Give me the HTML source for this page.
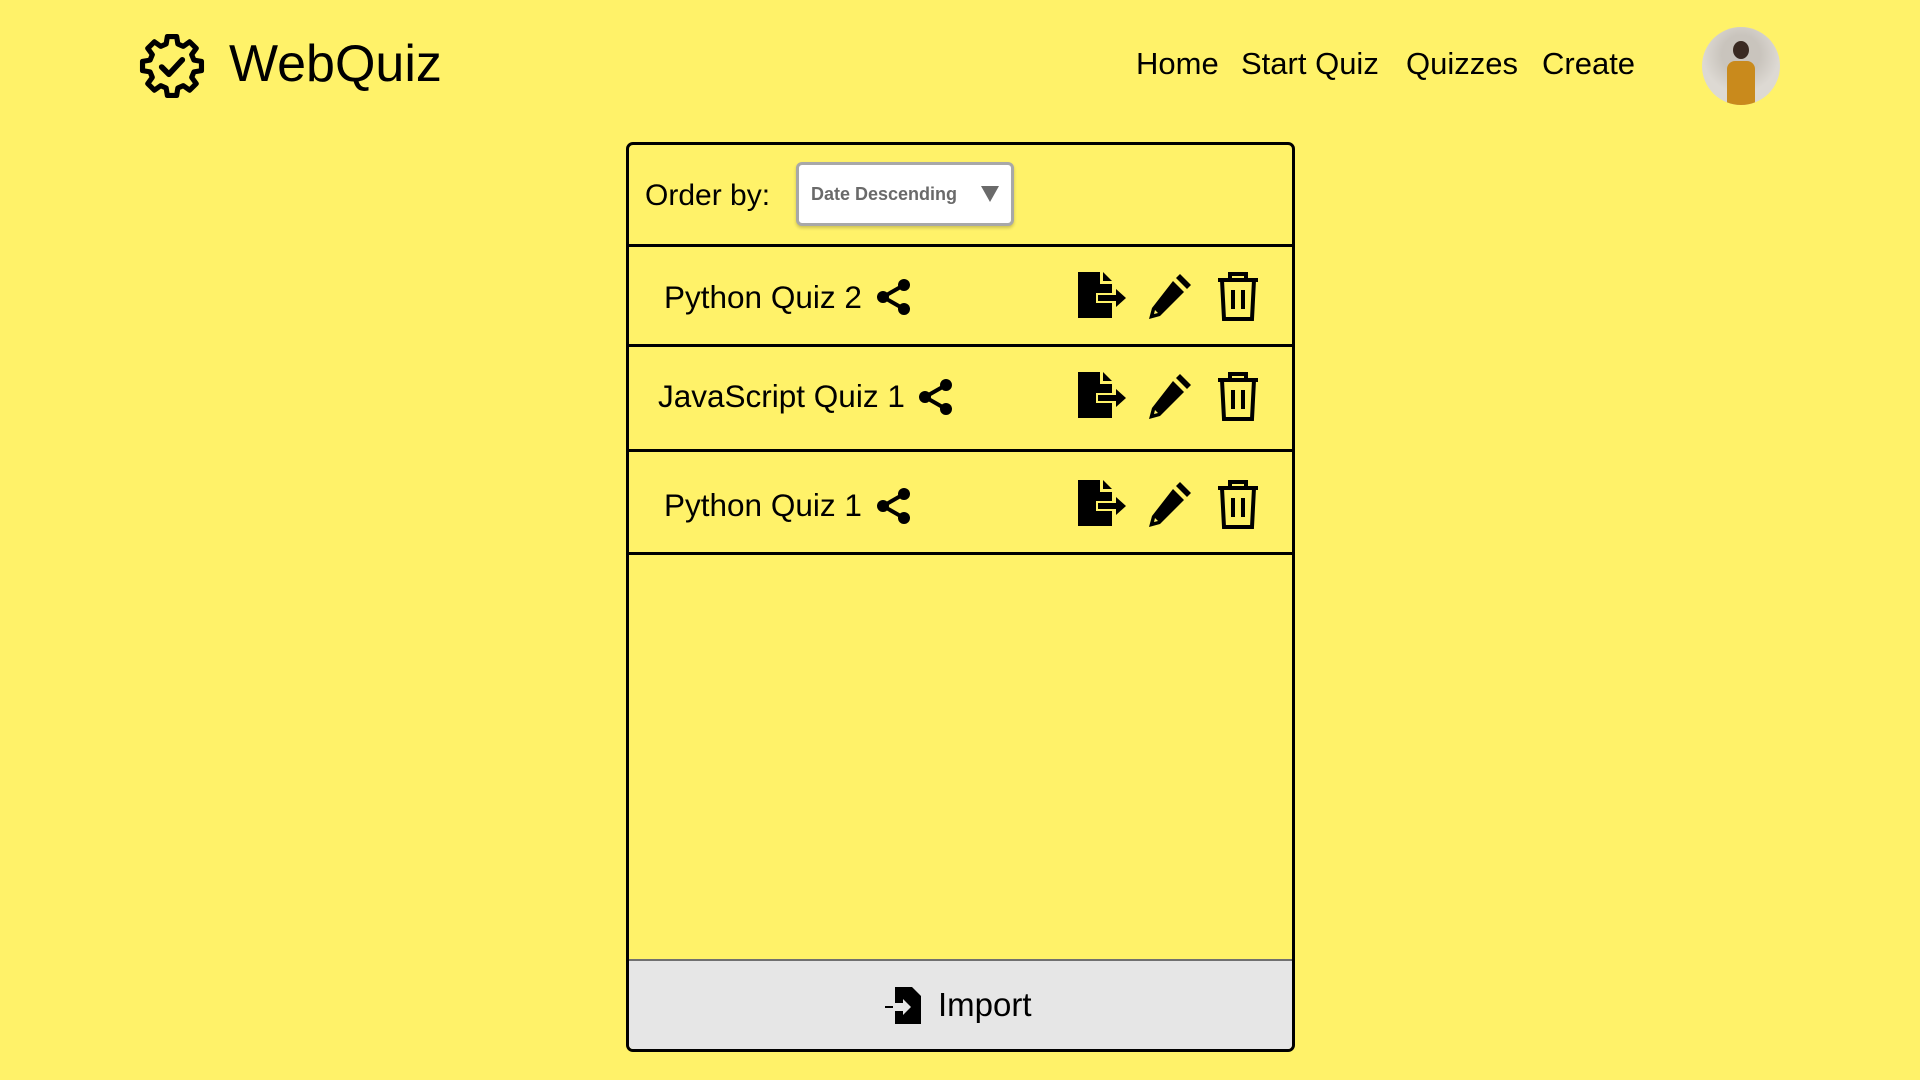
<!DOCTYPE html>
<html><head><meta charset="utf-8"><style>
*{margin:0;padding:0;box-sizing:border-box}
body{width:1920px;height:1080px;background:#fff269;font-family:"Liberation Sans",sans-serif;color:#000;position:relative;overflow:hidden}
.a{position:absolute}
.nav{top:46px;font-size:31px;white-space:nowrap}
.panel{left:626px;top:142px;width:669px;height:910px;border:3px solid #000;border-radius:7px;overflow:hidden}
.hr{position:absolute;left:0;width:100%;height:3px;background:#000}
.row{font-size:31.5px;white-space:nowrap}
</style></head><body>
<svg class="a" style="left:138px;top:32px" width="68" height="68" viewBox="0 0 66 66"><polygon points="54.3,27.3 61.6,28.5 61.6,37.5 54.3,38.7 52.1,44 56.5,50.1 50.1,56.5 44,52.1 38.7,54.3 37.5,61.6 28.5,61.6 27.3,54.3 22,52.1 15.9,56.5 9.5,50.1 13.9,44 11.7,38.7 4.4,37.5 4.4,28.5 11.7,27.3 13.9,22 9.5,15.9 15.9,9.5 22,13.9 27.3,11.7 28.5,4.4 37.5,4.4 38.7,11.7 44,13.9 50.1,9.5 56.5,15.9 52.1,22" fill="none" stroke="#000" stroke-width="5" stroke-linejoin="round"/><polyline points="23,34 30,41 43,27" fill="none" stroke="#000" stroke-width="5.5" stroke-linecap="round" stroke-linejoin="round"/></svg>
<div class="a" style="left:229px;top:34px;font-size:52px">WebQuiz</div>
<div class="a nav" style="left:1136px">Home</div>
<div class="a nav" style="left:1241px">Start Quiz</div>
<div class="a nav" style="left:1406px">Quizzes</div>
<div class="a nav" style="left:1542px">Create</div>
<div class="a" style="left:1702px;top:27px;width:78px;height:78px;border-radius:50%;background:radial-gradient(circle at 50% 35%,#c9c4bd 0 30%,#ddd9d3 60%);overflow:hidden"><div class="a" style="left:31px;top:14px;width:16px;height:18px;border-radius:50%;background:#3a2a22"></div><div class="a" style="left:25px;top:34px;width:28px;height:44px;border-radius:8px 8px 0 0;background:#c98a1c"></div></div>
<div class="a panel">
 <div class="a" style="left:16px;top:34px;font-size:30px">Order by:</div>
 <div class="a" style="left:167px;top:17px;width:218px;height:64px;background:#fff;border:3px solid #a8a8a8;border-radius:6px;box-shadow:0 2px 3px rgba(0,0,0,.2)"><span class="a" style="left:12px;top:19px;font-size:18px;font-weight:bold;color:#6a6a6a">Date Descending</span><svg class="a" style="left:182px;top:21px" width="18" height="16"><polygon points="0,0 18,0 9,16" fill="#6a6a6a"/></svg></div>
 <div class="hr" style="top:99px"></div>
 <div class="hr" style="top:199px"></div>
 <div class="hr" style="top:304px"></div>
 <div class="hr" style="top:407px"></div>
 <div class="a" style="left:0;top:814px;width:100%;height:100px;background:#e6e6e6;border-top:2px solid #707070"></div>
</div>
<div class="a row" style="left:664px;top:279px">Python Quiz 2</div>
<div class="a row" style="left:658px;top:378px">JavaScript Quiz 1</div>
<div class="a row" style="left:664px;top:487px">Python Quiz 1</div>
<svg width="0" height="0" style="position:absolute"><defs>
<g id="sh"><circle cx="28" cy="6" r="6"/><circle cx="28" cy="30" r="6"/><circle cx="7" cy="18" r="6"/><path d="M28 6L7 18L28 30" stroke="#000" stroke-width="4" fill="none"/></g>
<g id="ex"><path d="M0 0H22V12H34V21H18V31H34V46H0Z"/><path d="M25 0L34 9H25Z"/><path d="M20 23H38V17L48 26L38 35V29H20Z"/></g>
<g id="pe"><path d="M33 2L44 13L40 17L29 6Z"/><path d="M26 9L37 20L13 44L2 47L5 36Z M8 38L7 42L11 41Z" fill-rule="evenodd"/></g>
<g id="tr" fill="none" stroke="#000" stroke-width="4"><path d="M1 9H41"/><path d="M13 9V3H29V9"/><path d="M5 9L7 48H35L37 9"/><path d="M16 19V38M26 19V38"/></g>
</defs></svg>
<svg class="a" style="left:876px;top:279px" width="36" height="36"><use href="#sh"/></svg>
<svg class="a" style="left:918px;top:379px" width="36" height="36"><use href="#sh"/></svg>
<svg class="a" style="left:876px;top:488px" width="36" height="36"><use href="#sh"/></svg>
<svg class="a" style="left:1078px;top:272px" width="52" height="50"><use href="#ex"/></svg>
<svg class="a" style="left:1147px;top:272px" width="48" height="50"><use href="#pe"/></svg>
<svg class="a" style="left:1217px;top:271px" width="44" height="52"><use href="#tr"/></svg>
<svg class="a" style="left:1078px;top:372px" width="52" height="50"><use href="#ex"/></svg>
<svg class="a" style="left:1147px;top:372px" width="48" height="50"><use href="#pe"/></svg>
<svg class="a" style="left:1217px;top:371px" width="44" height="52"><use href="#tr"/></svg>
<svg class="a" style="left:1078px;top:480px" width="52" height="50"><use href="#ex"/></svg>
<svg class="a" style="left:1147px;top:480px" width="48" height="50"><use href="#pe"/></svg>
<svg class="a" style="left:1217px;top:479px" width="44" height="52"><use href="#tr"/></svg>
<svg class="a" style="left:885px;top:987px" width="38" height="38" viewBox="0 0 38 38"><path d="M10 0H27L36 9V37H10V24H18V28L26 20L18 12V16H10Z"/><path d="M0 19H8V21H0Z"/></svg>
<div class="a" style="left:938px;top:986px;font-size:33px">Import</div>
</body></html>
